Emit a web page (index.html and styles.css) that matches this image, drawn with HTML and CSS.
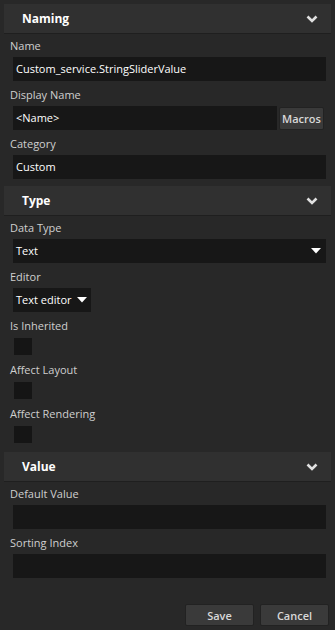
FILE: index.html
```html
<!DOCTYPE html>
<html lang="en">
<head>
    <meta charset="UTF-8">
    <meta name="viewport" content="width=device-width, initial-scale=1.0">
    <title>Property Editor</title>
    <link rel="stylesheet" href="styles.css">
</head>
<body>
    <div class="panel">
        <div class="section">
            <div class="section-header">
                <span>Naming</span>
                <svg class="chevron" width="12" height="8" viewBox="0 0 12 8"><path d="M1.5 1.5 L6 6 L10.5 1.5" /></svg>
            </div>
            <div class="section-body">
                <div class="field">
                    <label>Name</label>
                    <div class="input">Custom_service.StringSliderValue</div>
                </div>
                <div class="field">
                    <label>Display Name</label>
                    <div class="input-row">
                        <div class="input">&lt;Name&gt;</div>
                        <button class="btn macros">Macros</button>
                    </div>
                </div>
                <div class="field">
                    <label>Category</label>
                    <div class="input">Custom</div>
                </div>
            </div>
        </div>

        <div class="section">
            <div class="section-header">
                <span>Type</span>
                <svg class="chevron" width="12" height="8" viewBox="0 0 12 8"><path d="M1.5 1.5 L6 6 L10.5 1.5" /></svg>
            </div>
            <div class="section-body">
                <div class="field">
                    <label>Data Type</label>
                    <div class="input select">
                        <span>Text</span>
                        <svg class="caret" width="10" height="6" viewBox="0 0 10 6"><path d="M0 0 H10 L5 5.5 Z" /></svg>
                    </div>
                </div>
                <div class="field">
                    <label>Editor</label>
                    <div class="input select small">
                        <span>Text editor</span>
                        <svg class="caret" width="10" height="6" viewBox="0 0 10 6"><path d="M0 0 H10 L5 5.5 Z" /></svg>
                    </div>
                </div>
                <div class="field check">
                    <label>Is Inherited</label>
                    <div class="checkbox"></div>
                </div>
                <div class="field check">
                    <label>Affect Layout</label>
                    <div class="checkbox"></div>
                </div>
                <div class="field check">
                    <label>Affect Rendering</label>
                    <div class="checkbox"></div>
                </div>
            </div>
        </div>

        <div class="section">
            <div class="section-header">
                <span>Value</span>
                <svg class="chevron" width="12" height="8" viewBox="0 0 12 8"><path d="M1.5 1.5 L6 6 L10.5 1.5" /></svg>
            </div>
            <div class="section-body">
                <div class="field">
                    <label>Default Value</label>
                    <div class="input"></div>
                </div>
                <div class="field">
                    <label>Sorting Index</label>
                    <div class="input"></div>
                </div>
            </div>
        </div>

        <div class="actions">
            <button class="btn">Save</button>
            <button class="btn">Cancel</button>
        </div>
    </div>
</body>
</html>
```

FILE: styles.css
```css
body {
    margin: 0;
    background: #282828;
    font-family: "Open Sans", "Noto Sans", sans-serif;
    font-size: 11px;
    color: #d0d0d0;
}
.panel {
    width: 335px;
    height: 630px;
    padding-top: 4px;
    box-sizing: border-box;
}
.section-header {
    margin: 0 4px;
    height: 29px;
    background: #303030;
    border-bottom: 1px solid #1f1f1f;
    display: flex;
    align-items: center;
    justify-content: space-between;
    padding: 0 13px 0 18px;
    font-weight: bold;
    font-size: 12px;
    color: #fff;
}
.chevron path {
    fill: none;
    stroke: #e0e0e0;
    stroke-width: 2.6;
}
.section-body {
    padding: 4px 9px 7px 10px;
    display: flex;
    flex-direction: column;
    gap: 6px;
}
.field label {
    display: block;
    height: 16px;
    line-height: 16px;
    margin-bottom: 3px;
    color: #cfcfcf;
}
.input {
    margin-left: 3px;
    height: 24px;
    line-height: 24px;
    padding: 0 3px;
    background: #171717;
    color: #fff;
    box-sizing: border-box;
    white-space: nowrap;
}
.input-row {
    display: flex;
    gap: 2px;
    margin-right: 2px;
}
.input-row .input {
    flex: 1;
}
.btn {
    font-family: inherit;
    font-size: 11px;
    font-weight: 600;
    color: #d8d8d8;
    background: #3a3a3a;
    border: 1px solid #222;
    border-radius: 2px;
    padding: 0;
}
.macros {
    width: 45px;
    height: 23px;
    margin-top: 1px;
}
.select {
    display: flex;
    align-items: center;
    justify-content: space-between;
    padding-right: 5px;
}
.select.small {
    width: 78px;
    padding-right: 4px;
}
.caret path {
    fill: #fff;
}
.field.check label {
    margin-bottom: 4px;
}
.checkbox {
    width: 18px;
    height: 17px;
    margin-left: 4px;
    background: #151515;
}
.section-body .field.check + .field.check {
    margin-top: 1px;
}
.section:nth-child(2) .section-body {
    padding-bottom: 9px;
}
.actions {
    display: flex;
    justify-content: flex-end;
    gap: 6px;
    padding: 19px 6px 0 0;
}
.actions .btn {
    width: 69px;
    height: 22px;
}
```
